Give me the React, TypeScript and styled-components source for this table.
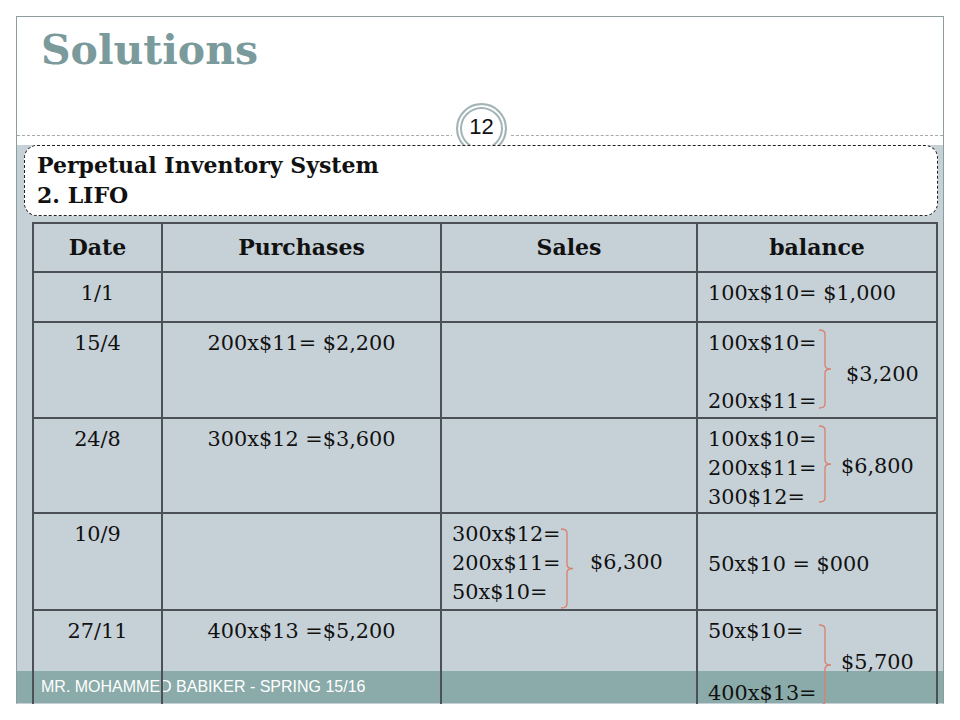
import React from "react";
import styled, { createGlobalStyle } from "styled-components";

const Global = createGlobalStyle`
  html, body { margin: 0; padding: 0; background: #ffffff; }
  body { font-family: "DejaVu Serif", Georgia, serif; color: #111; }
`;

const Page = styled.div`
  padding: 16px 0 0 16px;
`;

const Slide = styled.div`
  position: relative;
  width: 926px;
  height: 686px;
  border: 1px solid #8d9c9c;
  border-bottom-color: #c9d2d2;
  background: #ffffff;
  display: flex;
  flex-direction: column;
`;

const Header = styled.div`
  position: relative;
  flex: none;
  height: 128px;
  display: flex;
  flex-direction: column;
`;

const Title = styled.h1`
  margin: 12px 0 0 24px;
  font-family: "DejaVu Serif", Georgia, serif;
  font-weight: 700;
  font-size: 41px;
  line-height: 42px;
  color: #7b9a9c;
`;

const Rule = styled.div`
  margin-top: auto;
  margin-bottom: 9px;
  border-top: 1px dashed #a3abab;
`;

const PageBadge = styled.div`
  position: absolute;
  left: 439px;
  top: 86px;
  width: 51px;
  height: 51px;
  box-sizing: border-box;
  border-radius: 50%;
  border: 2px solid #a2b4b4;
  background: #ffffff;
  box-shadow: inset 0 0 0 2px #ffffff, inset 0 0 0 4px #a2b4b4, 0 0 0 5px #ffffff;
  display: flex;
  justify-content: center;
  align-items: center;
  padding-bottom: 4px;
  font-family: "Liberation Sans", Arial, sans-serif;
  font-size: 22px;
  line-height: 22px;
  color: #111;
`;

const Body = styled.div`
  position: relative;
  flex: 1;
  background: #c6d0d7;
  padding: 0 5px 0 7px;
  display: flex;
  flex-direction: column;
`;

const SubtitleBox = styled.div`
  flex: none;
  height: 61px;
  padding: 4px 12px 4px 12px;
  border: 1px dashed #222;
  border-radius: 13px;
  background: #ffffff;
  font-family: "DejaVu Serif", Georgia, serif;
  font-weight: 700;
  font-size: 22px;
  line-height: 30px;
  color: #111;
`;

const Table = styled.table`
  position: relative;
  z-index: 1;
  flex: none;
  margin: 6px 0 0 8px;
  width: 904px;
  border-collapse: collapse;
  table-layout: fixed;
  font-family: "DejaVu Serif", Georgia, serif;
  font-size: 20.8px;
  line-height: 29px;
  color: #111;
`;

const Row = styled.tr<{ $h: number }>`
  height: ${(p) => p.$h}px;
`;

const Th = styled.th`
  border: 2px solid #4b5157;
  padding: 0 10px;
  font-weight: 700;
  font-size: 22px;
  text-align: center;
  vertical-align: middle;
`;

const Td = styled.td<{ $align?: string; $valign?: string }>`
  border: 2px solid #4b5157;
  padding: 6px 10px 0 10px;
  text-align: ${(p) => p.$align || "left"};
  vertical-align: ${(p) => p.$valign || "top"};
  white-space: nowrap;
`;

const Braced = styled.div`
  display: flex;
  align-items: flex-start;
`;

const Lines = styled.div<{ $w: number; $gap: number }>`
  width: ${(p) => p.$w}px;
  display: flex;
  flex-direction: column;
  row-gap: ${(p) => p.$gap}px;
`;

const BraceSvg = styled.svg<{ $mt: number }>`
  flex: none;
  display: block;
  margin-top: ${(p) => p.$mt}px;
`;

const Total = styled.div<{ $ml: number; $dy: number }>`
  align-self: center;
  margin-left: ${(p) => p.$ml}px;
  transform: translateY(${(p) => p.$dy}px);
`;

const Footer = styled.div`
  position: absolute;
  left: 0;
  right: 0;
  bottom: 0;
  height: 32px;
  background: #8aaba9;
  display: flex;
  align-items: center;
  padding-left: 24px;
  font-family: "Liberation Sans", Arial, sans-serif;
  font-size: 16px;
  color: #ffffff;
`;

function Brace({ h, mt }: { h: number; mt: number }) {
  const m = h / 2;
  const d = `M1 1 Q7 1 7 5 L7 ${m - 4} Q7 ${m} 13 ${m} Q7 ${m} 7 ${m + 4} L7 ${h - 5} Q7 ${h - 1} 1 ${h - 1}`;
  return (
    <BraceSvg $mt={mt} width={16} height={h} viewBox={`0 0 16 ${h}`}>
      <path d={d} fill="none" stroke="#d9806e" strokeWidth={1.3} />
    </BraceSvg>
  );
}

type Group = {
  lines: string[];
  total: string;
  lead: number;
  h: number;
  mt: number;
  ml: number;
  dy?: number;
  gap?: number;
};

function BraceGroup({ g }: { g: Group }) {
  return (
    <Braced>
      <Lines $w={g.lead} $gap={g.gap || 0}>
        {g.lines.map((l, i) => (
          <div key={i}>{l || "\u00a0"}</div>
        ))}
      </Lines>
      <Brace h={g.h} mt={g.mt} />
      <Total $ml={g.ml} $dy={g.dy || 0}>{g.total}</Total>
    </Braced>
  );
}

const groups: Record<string, Group> = {
  r2: { lines: ["100x$10=", "", "200x$11="], total: "$3,200", lead: 110, h: 80, mt: 0, ml: 12, dy: 2 },
  r3: { lines: ["100x$10=", "200x$11=", "300$12="], total: "$6,800", lead: 110, h: 78, mt: 0, ml: 7, dy: -2 },
  r4: { lines: ["300x$12=", "200x$11=", "50x$10="], total: "$6,300", lead: 108, h: 81, mt: 8, ml: 14, dy: -2 },
  r5: { lines: ["50x$10=", "", "400x$13="], total: "$5,700", lead: 110, h: 82, mt: 7, ml: 7, dy: 0, gap: 2 },
};

export default function App() {
  return (
    <Page>
      <Global />
      <Slide>
        <Header>
          <Title>Solutions</Title>
          <Rule />
          <PageBadge>12</PageBadge>
        </Header>
        <Body>
          <SubtitleBox>
            Perpetual Inventory System
            <br />
            2. LIFO
          </SubtitleBox>
          <Table>
            <colgroup>
              <col style={{ width: 129 }} />
              <col style={{ width: 279 }} />
              <col style={{ width: 256 }} />
              <col style={{ width: 240 }} />
            </colgroup>
            <thead>
              <Row $h={49}>
                <Th>Date</Th>
                <Th>Purchases</Th>
                <Th>Sales</Th>
                <Th>balance</Th>
              </Row>
            </thead>
            <tbody>
              <Row $h={50}>
                <Td $align="center">1/1</Td>
                <Td />
                <Td />
                <Td>100x$10= $1,000</Td>
              </Row>
              <Row $h={96}>
                <Td $align="center">15/4</Td>
                <Td $align="center">200x$11= $2,200</Td>
                <Td />
                <Td>
                  <BraceGroup g={groups.r2} />
                </Td>
              </Row>
              <Row $h={95}>
                <Td $align="center">24/8</Td>
                <Td $align="center">300x$12 =$3,600</Td>
                <Td />
                <Td>
                  <BraceGroup g={groups.r3} />
                </Td>
              </Row>
              <Row $h={96}>
                <Td $align="center">10/9</Td>
                <Td />
                <Td>
                  <BraceGroup g={groups.r4} />
                </Td>
                <Td $valign="middle">50x$10 = $000</Td>
              </Row>
              <Row $h={96}>
                <Td $align="center">27/11</Td>
                <Td $align="center">400x$13 =$5,200</Td>
                <Td />
                <Td>
                  <BraceGroup g={groups.r5} />
                </Td>
              </Row>
            </tbody>
          </Table>
        </Body>
        <Footer>MR. MOHAMMED BABIKER - SPRING 15/16</Footer>
      </Slide>
    </Page>
  );
}
